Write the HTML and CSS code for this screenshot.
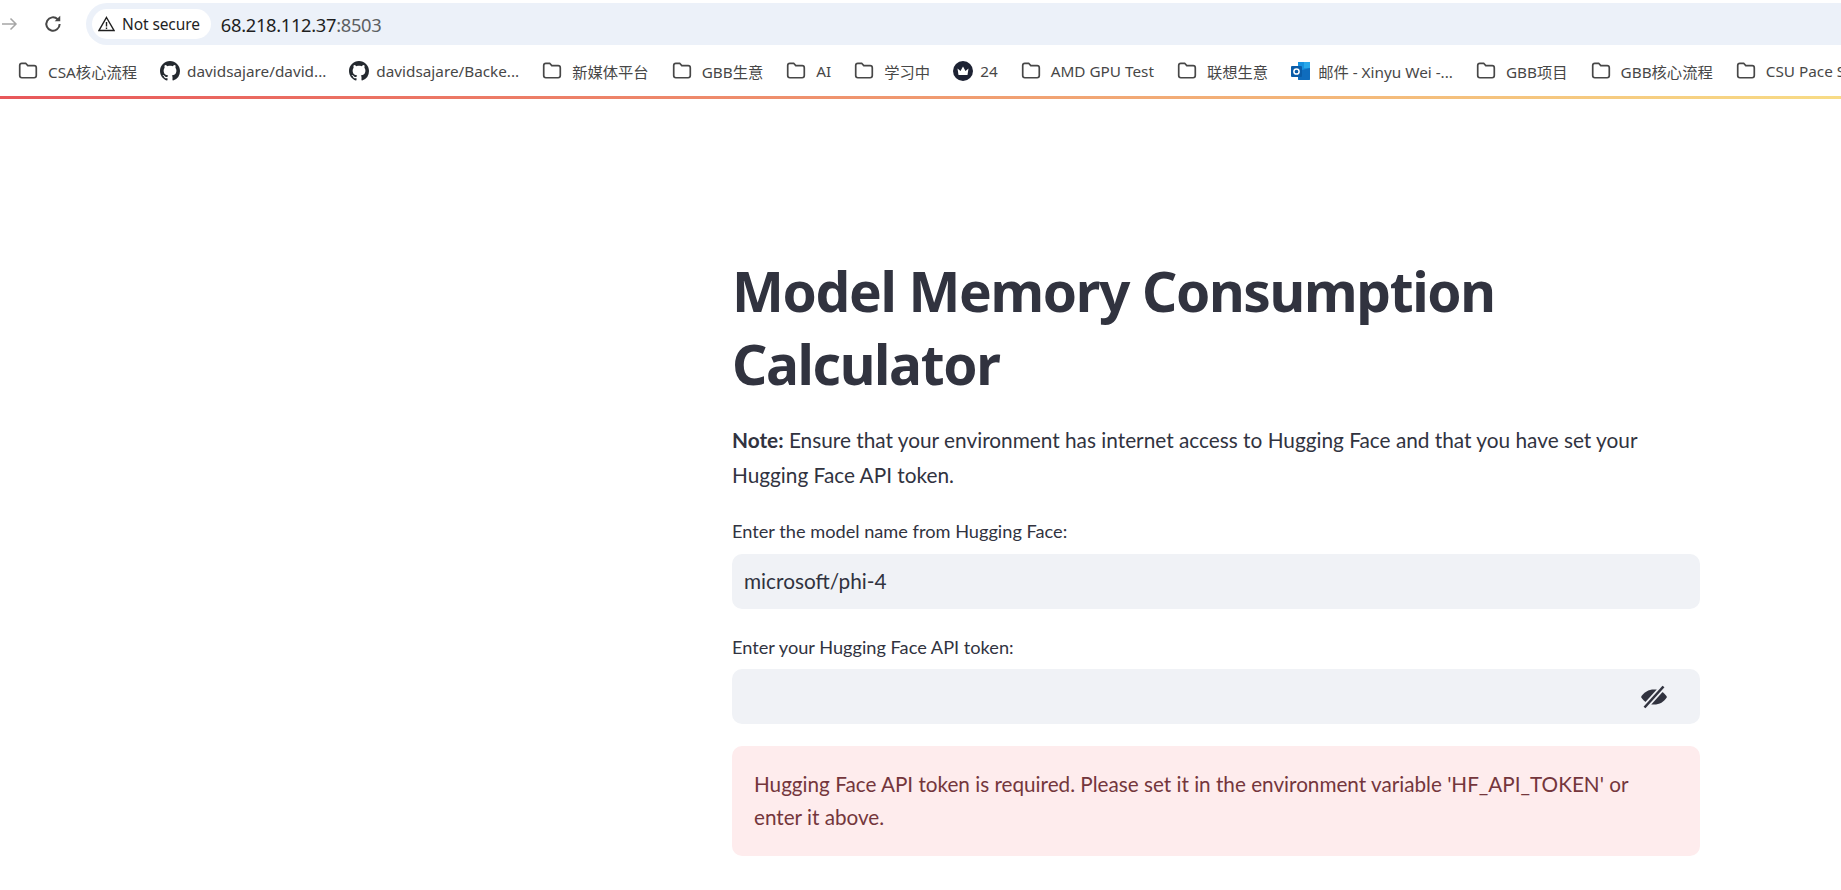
FILE: index.html
```html
<!DOCTYPE html>
<html lang="en">
<head>
  <meta charset="UTF-8" />
  <meta name="viewport" content="width=device-width, initial-scale=1.0" />
  <title>Model Memory Consumption Calculator</title>
  <link rel="stylesheet" href="styles.css">
</head>
<body>
  <svg class="defs" width="0" height="0">
    <symbol id="folder" viewBox="0 0 18 16">
      <path d="M1.2 3.2C1.2 2 2 1.2 3.2 1.2h3.6l2 2.2h6c1.1 0 2 .9 2 2v7.4c0 1.1-.9 2-2 2H3.200c-1.100 0-2-.9-2-2z" fill="none" stroke="#474747" stroke-width="1.600"/>
    </symbol>
    <symbol id="github" viewBox="0 0 16 16">
      <path fill="#24292f" d="M8 0C3.580 0 0 3.580 0 8c0 3.540 2.290 6.530 5.470 7.590.4.070.55-.17.55-.38 0-.19-.01-.82-.01-1.490-2.010.37-2.530-.49-2.690-.94-.09-.23-.48-.94-.82-1.130-.28-.15-.68-.52-.01-.53.63-.01 1.080.58 1.230.82.72 1.210 1.870.87 2.330.66.070-.52.28-.87.51-1.070-1.780-.2-3.640-.89-3.640-3.950 0-.87.31-1.590.82-2.150-.08-.2-.36-1.020.08-2.120 0 0 .67-.21 2.200.82.64-.18 1.320-.27 2-.27s1.360.09 2 .27c1.530-1.040 2.200-.82 2.200-.82.44 1.100.16 1.920.08 2.120.51.56.82 1.270.82 2.150 0 3.070-1.870 3.750-3.650 3.950.29.25.54.73.54 1.480 0 1.070-.01 1.930-.01 2.200 0 .21.15.46.55.38A8.010 8.010 0 0 0 16 8c0-4.420-3.580-8-8-8z"/>
    </symbol>
  </svg>

  <header class="chrome">
    <div class="toolbar">
      <svg class="nav-icon forward" width="18" height="16" viewBox="0 0 18 16"><path d="M2 8h14M10.500 2.500 16 8l-5.500 5.500" fill="none" stroke="#a6a6a6" stroke-width="1.500"/></svg>
      <svg class="nav-icon reload" width="20" height="20" viewBox="0 0 18 18"><path d="M15 9a6 6 0 1 1-1.800-4.300" fill="none" stroke="#474747" stroke-width="1.800"/><path d="M15.500 1.500v5h-5z" fill="#474747"/></svg>
      <div class="omnibox">
        <div class="security">
          <svg width="17" height="16" viewBox="0 0 17 16"><path d="M8.500 1.500 16 14.500H1zM8.500 6v4.500M8.500 11.500v1.500" fill="none" stroke="#1f1f1f" stroke-width="1.400"/></svg>
          <span>Not secure</span>
        </div>
        <span class="url">68.218.112.37<span class="port">:8503</span></span>
      </div>
    </div>
    <nav class="bookmarks">
      <a class="bm"><svg class="ico"><use href="#folder"/></svg>CSA核心流程</a>
      <a class="bm"><svg class="ico gh"><use href="#github"/></svg>davidsajare/david...</a>
      <a class="bm"><svg class="ico gh"><use href="#github"/></svg>davidsajare/Backe...</a>
      <a class="bm"><svg class="ico"><use href="#folder"/></svg>新媒体平台</a>
      <a class="bm"><svg class="ico"><use href="#folder"/></svg>GBB生意</a>
      <a class="bm"><svg class="ico"><use href="#folder"/></svg>AI</a>
      <a class="bm"><svg class="ico"><use href="#folder"/></svg>学习中</a>
      <a class="bm"><svg class="ico gh" viewBox="0 0 20 20"><circle cx="10" cy="10" r="10" fill="#1d2233"/><path d="M4.500 7.500 7.500 10 10 5.500l2.500 4.500 3-2.500-1 6.500h-9z" fill="#fff"/></svg>24</a>
      <a class="bm"><svg class="ico"><use href="#folder"/></svg>AMD GPU Test</a>
      <a class="bm"><svg class="ico"><use href="#folder"/></svg>联想生意</a>
      <a class="bm"><svg class="ico gh" viewBox="0 0 20 20"><path d="M7 1h12v17a1 1 0 0 1-1 1H8a1 1 0 0 1-1-1z" fill="#1490df"/><path d="M13 1h6v6h-6z" fill="#28a8ea"/><path d="M7 10l12-3v11a1 1 0 0 1-1 1H8a1 1 0 0 1-1-1z" fill="#0f6cbd"/><rect y="5" width="11" height="11" rx="1" fill="#0a5ca8"/><circle cx="5.500" cy="10.500" r="2.600" fill="none" stroke="#fff" stroke-width="1.500"/></svg>邮件 - Xinyu Wei -...</a>
      <a class="bm"><svg class="ico"><use href="#folder"/></svg>GBB项目</a>
      <a class="bm"><svg class="ico"><use href="#folder"/></svg>GBB核心流程</a>
      <a class="bm"><svg class="ico"><use href="#folder"/></svg>CSU Pace Sync</a>
    </nav>
    <div class="decoration"></div>
  </header>

  <main class="main">
    <h1>Model Memory Consumption Calculator</h1>
    <p class="note"><strong>Note:</strong> Ensure that your environment has internet access to Hugging Face and that you have set your Hugging Face API token.</p>
    <label class="field-label">Enter the model name from Hugging Face:</label>
    <div class="input">microsoft/phi-4</div>
    <label class="field-label second">Enter your Hugging Face API token:</label>
    <div class="input password">
      <svg width="28" height="24" viewBox="0 0 28 24"><path d="M1 12c3-5 7.500-7.500 13-7.500S24 7 27 12c-3 5-7.500 7.500-13 7.500S4 17 1 12z" fill="#31333f"/><path d="M4.500 22.500 23.500 1.500" stroke="#f0f2f6" stroke-width="6"/><path d="M4.500 22.500 23.500 1.500" stroke="#31333f" stroke-width="2.600"/></svg>
    </div>
    <div class="alert">Hugging Face API token is required. Please set it in the environment variable 'HF_API_TOKEN' or enter it above.</div>
  </main>
</body>
</html>
```

FILE: styles.css
```css
html, body {
  margin: 0;
  height: 890px;
  overflow: hidden;
  background: #fff;
}
body {
  font-family: "Lato", "Noto Sans CJK SC", sans-serif;
  color: #31333f;
}
.defs {
  position: absolute;
}
.chrome {
  font-family: "Noto Sans", "Noto Sans CJK SC", sans-serif;
}
.toolbar {
  display: flex;
  align-items: center;
  height: 42px;
  padding-top: 3px;
}
.nav-icon {
  flex: none;
}
.reload {
  margin-left: 25px;
}
.omnibox {
  display: flex;
  align-items: center;
  flex: 1;
  height: 42px;
  margin-left: 23px;
  padding-left: 6px;
  background: #ecf1f9;
  border-radius: 21px 0 0 21px;
}
.security {
  display: flex;
  align-items: center;
  gap: 7px;
  height: 30px;
  padding: 0 11px 0 6px;
  background: #fff;
  border-radius: 15px;
  font-size: 15.500px;
  letter-spacing: -0.100px;
  color: #1f1f1f;
}
.url {
  margin-left: 10px;
  font-size: 18.300px;
  color: #1f1f1f;
  letter-spacing: -0.300px;
}
.port {
  color: #5c5f63;
}
.bookmarks {
  display: flex;
  align-items: center;
  gap: 23px;
  height: 51px;
  padding-left: 18px;
  white-space: nowrap;
  overflow: hidden;
  font-size: 15.300px;
  color: #474747;
}
.bm {
  display: flex;
  align-items: center;
  flex: none;
  gap: 10px;
}
.ico {
  width: 20px;
  height: 17px;
  flex: none;
}
.ico.gh {
  width: 20px;
  height: 20px;
  margin-right: -3px;
}
.decoration {
  height: 3px;
  background: linear-gradient(90deg, #e8575a, #f8dc86);
}
.main {
  width: 968px;
  margin-left: 732px;
  padding-top: 155px;
}
h1 {
  margin: 0 40px 0 0;
  font-family: "Noto Sans", sans-serif;
  font-size: 55px;
  line-height: 73px;
  font-weight: 700;
  letter-spacing: -1.350px;
  color: #31333f;
}
.note {
  margin: 22px 0 0;
  font-size: 20.800px;
  line-height: 35px;
}
.field-label {
  display: block;
  margin-top: 26px;
  font-size: 18.200px;
  line-height: 26px;
}
.field-label.second {
  margin-top: 25px;
}
.input {
  display: flex;
  align-items: center;
  height: 53px;
  margin-top: 10px;
  padding: 0 12px 2px;
  background: #f0f2f6;
  border-radius: 10px;
  font-size: 20.800px;
}
.input.password {
  height: 55px;
  margin-top: 9px;
  padding: 0 32px 0 12px;
  justify-content: flex-end;
}
.alert {
  margin-top: 22px;
  padding: 22px 40px 22px 22px;
  background: #feeced;
  border-radius: 10px;
  font-size: 20.700px;
  line-height: 33px;
  color: #74363c;
}
```
